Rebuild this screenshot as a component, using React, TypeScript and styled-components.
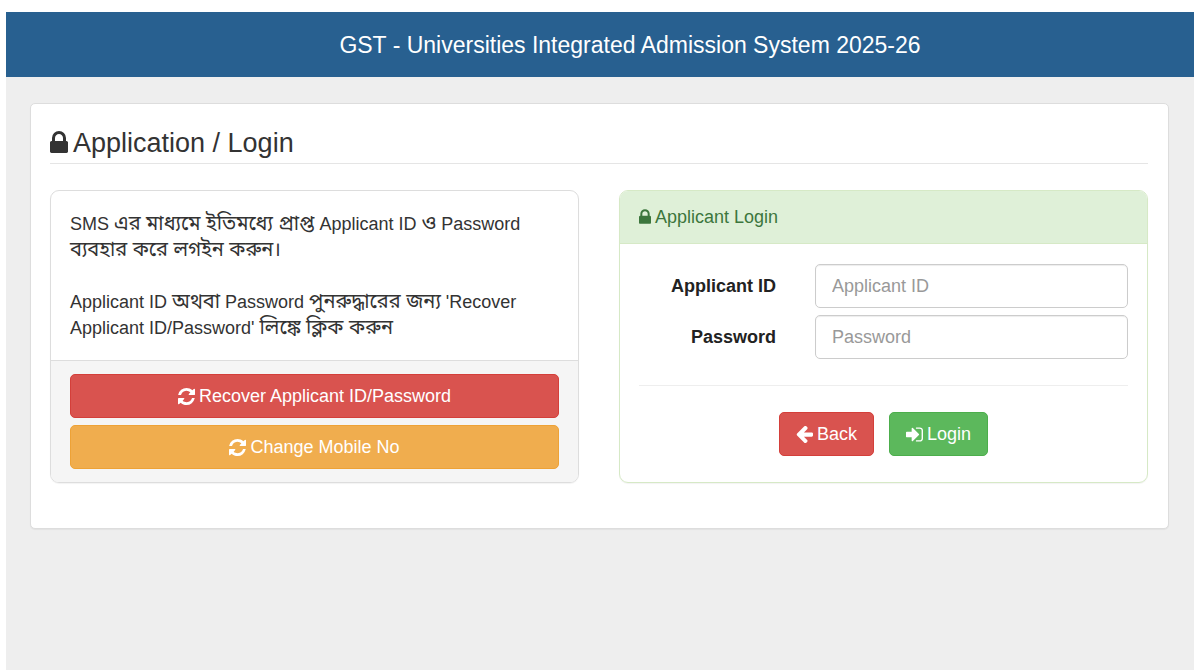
import React from 'react';
import styled, { createGlobalStyle } from 'styled-components';

const Global = createGlobalStyle`
  *, *::before, *::after { box-sizing: border-box; }
  body {
    margin: 0;
    background: #fff;
    color: #333;
    font: 18px/26px "Liberation Sans", "Noto Sans Bengali", "Noto Sans", sans-serif;
  }
`;

const Page = styled.div`
  display: flex;
  flex-direction: column;
  min-height: 100vh;
  padding: 12px 6px 0;
`;

const Banner = styled.header`
  padding: 18px 24px 17px 84px;
  background: #286090;
  color: #fff;
  text-align: center;
  font-size: 23px;
  line-height: 30px;
`;

const Main = styled.main`
  flex: 1;
  padding: 26px 25px 26px 24px;
  background: #eee;
`;

const Card = styled.section`
  padding: 20px 20px 45px 19px;
  background: #fff;
  border: 1px solid #ddd;
  border-radius: 5px;
  box-shadow: 0 1px 1px rgba(0, 0, 0, 0.05);
`;

const Title = styled.h1`
  display: flex;
  align-items: center;
  gap: 5px;
  margin: 0 0 26px;
  padding-bottom: 1px;
  border-bottom: 1px solid #e5e5e5;
  font-size: 27px;
  font-weight: 400;
  line-height: 38px;

  svg { margin-bottom: 2px; }
`;

const Columns = styled.div`
  display: grid;
  grid-template-columns: 1fr 1fr;
  gap: 40px;
`;

const Panel = styled.section<{ $tone: string }>`
  display: flex;
  flex-direction: column;
  border: 1px solid ${(p) => p.$tone};
  border-radius: 9px;
  overflow: hidden;
  box-shadow: 0 1px 1px rgba(0, 0, 0, 0.05);
`;

const PanelBody = styled.div`
  flex: 1;
  padding: 20px 19px 19px;
`;

const Paragraph = styled.p`
  margin: 0 0 26px;
  &:last-child { margin-bottom: 0; }
`;

const Bengali = styled.span.attrs({ lang: 'bn' })`
  font-size: 20px;
  line-height: 20px;
`;

const PanelFooter = styled.div`
  display: flex;
  flex-direction: column;
  gap: 7px;
  padding: 13px 19px;
  background: #f5f5f5;
  border-top: 1px solid #ddd;
`;

const PanelHeading = styled.h2`
  display: flex;
  align-items: center;
  gap: 4px;
  margin: 0;
  padding: 13px 19px;
  background: #dff0d8;
  border-bottom: 1px solid #d6e9c6;
  color: #3c763d;
  font-size: 18px;
  font-weight: 400;
  line-height: 26px;

  svg { margin-bottom: 2px; }
`;

const tones = {
  danger: ['#d9534f', '#d43f3a'],
  warning: ['#f0ad4e', '#eea236'],
  success: ['#5cb85c', '#4cae4c'],
};

const Button = styled.button<{ $tone: keyof typeof tones }>`
  display: flex;
  align-items: center;
  justify-content: center;
  gap: 4px;
  height: 44px;
  padding: 0 16px;
  border: 1px solid ${(p) => tones[p.$tone][1]};
  border-radius: 5px;
  background: ${(p) => tones[p.$tone][0]};
  color: #fff;
  font: inherit;
  cursor: pointer;
`;

const FormRow = styled.div`
  display: grid;
  grid-template-columns: 137px 1fr;
  gap: 39px;
  align-items: center;
  margin-bottom: 7px;
`;

const Label = styled.label`
  color: #222;
  text-align: right;
  font-weight: 700;
`;

const Input = styled.input`
  width: 100%;
  height: 44px;
  padding: 0 16px;
  border: 1px solid #ccc;
  border-radius: 5px;
  background: #fff;
  box-shadow: inset 0 1px 1px rgba(0, 0, 0, 0.075);
  color: #555;
  font: inherit;
  &::placeholder { color: #999; opacity: 1; }
`;

const Divider = styled.hr`
  margin: 26px 0;
  border: 0;
  border-top: 1px solid #eee;
`;

const Actions = styled.div`
  display: flex;
  gap: 15px;
  padding: 0 0 7px 140px;
`;

const LockIcon = ({ width, height }: { width: number; height: number }) => (
  <svg width={width} height={height} viewBox="0 128 1152 1408" fill="currentColor" aria-hidden="true">
    <path d="M320 768h512V576q0-106-75-181t-181-75-181 75-75 181v192zm832 96v576q0 40-28 68t-68 28H96q-40 0-68-28t-28-68V864q0-40 28-68t68-28h32V576q0-184 132-316t316-132 316 132 132 316v192h32q40 0 68 28t28 68z" />
  </svg>
);

const RefreshIcon = () => (
  <svg width="17" height="17" viewBox="0 0 1536 1536" fill="currentColor" aria-hidden="true">
    <path d="M1511 928q0 5-1 7-64 268-268 434.500T764 1536q-146 0-282.500-55T238 1324l-129 129q-19 19-45 19t-45-19-19-45V960q0-26 19-45t45-19h448q26 0 45 19t19 45-19 45l-137 137q71 66 161 102t187 36q134 0 250-65t186-179q11-17 53-117 8-23 30-23h192q13 0 22.500 9.500t9.500 22.500zm25-800v448q0 26-19 45t-45 19h-448q-26 0-45-19t-19-45 19-45l138-138Q969 256 768 256q-134 0-250 65T332 500q-11 17-53 117-8 23-30 23H50q-13 0-22.500-9.500T18 608v-7q65-268 270-434.500T768 0q146 0 284 55.500T1297 212l130-129q19-19 45-19t45 19 19 45z" />
  </svg>
);

const ArrowLeftIcon = () => (
  <svg width="17" height="17" viewBox="128 192 1536 1536" fill="currentColor" aria-hidden="true">
    <path d="M1664 896v128q0 53-32.500 90.500t-84.500 37.500h-704l293 294q38 36 38 90t-38 90l-75 76q-37 37-90 37-52 0-91-37l-651-652q-37-37-37-90 0-52 37-91l651-650q38-38 91-38 52 0 90 38l75 74q38 38 38 91t-38 91l-293 293h704q52 0 84.500 37.500t32.500 90.500z" />
  </svg>
);

const SignInIcon = () => (
  <svg width="17" height="17" viewBox="0 0 1536 1536" fill="currentColor" aria-hidden="true">
    <path d="M1184 768q0 26-19 45l-544 544q-19 19-45 19t-45-19-19-45v-288H64q-26 0-45-19t-19-45V576q0-26 19-45t45-19h448V224q0-26 19-45t45-19 45 19l544 544q19 19 19 45zm352-352v704q0 119-84.500 203.500T1248 1408H928q-13 0-22.500-9.500T896 1376v-64q0-32 32-32h320q66 0 113-47t47-113V416q0-66-47-113t-113-47H928q-32 0-32-32V160q0-32 32-32h320q119 0 203.500 84.500T1536 416z" />
  </svg>
);

export default function App() {
  return (
    <Page>
      <Global />
      <Banner>GST - Universities Integrated Admission System 2025-26</Banner>
      <Main>
        <Card>
          <Title><LockIcon width={18} height={22} />Application / Login</Title>
          <Columns>
            <Panel $tone="#ddd">
              <PanelBody>
                <Paragraph>
                  SMS <Bengali>এর মাধ্যমে ইতিমধ্যে প্রাপ্ত</Bengali> Applicant ID <Bengali>ও</Bengali> Password
                  <br />
                  <Bengali>ব্যবহার করে লগইন করুন।</Bengali>
                </Paragraph>
                <Paragraph>
                  Applicant ID <Bengali>অথবা</Bengali> Password <Bengali>পুনরুদ্ধারের জন্য</Bengali> 'Recover
                  <br />
                  Applicant ID/Password' <Bengali>লিঙ্কে ক্লিক করুন</Bengali>
                </Paragraph>
              </PanelBody>
              <PanelFooter>
                <Button type="button" $tone="danger"><RefreshIcon />Recover Applicant ID/Password</Button>
                <Button type="button" $tone="warning"><RefreshIcon />Change Mobile No</Button>
              </PanelFooter>
            </Panel>
            <Panel as="form" $tone="#d6e9c6">
              <PanelHeading><LockIcon width={12} height={15} />Applicant Login</PanelHeading>
              <PanelBody>
                <FormRow>
                  <Label htmlFor="applicant">Applicant ID</Label>
                  <Input id="applicant" placeholder="Applicant ID" />
                </FormRow>
                <FormRow>
                  <Label htmlFor="password">Password</Label>
                  <Input id="password" type="password" placeholder="Password" />
                </FormRow>
                <Divider />
                <Actions>
                  <Button type="button" $tone="danger"><ArrowLeftIcon />Back</Button>
                  <Button type="submit" $tone="success"><SignInIcon />Login</Button>
                </Actions>
              </PanelBody>
            </Panel>
          </Columns>
        </Card>
      </Main>
    </Page>
  );
}
